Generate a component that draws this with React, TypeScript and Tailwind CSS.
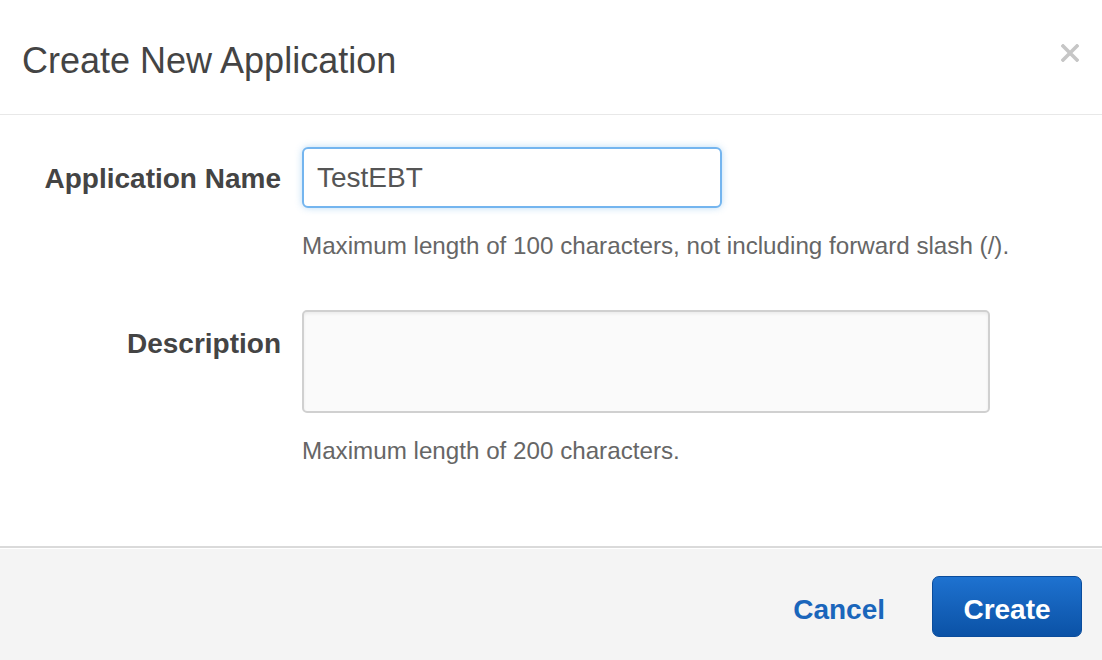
import React from "react";

const font = { fontFamily: '"Liberation Sans", Arial, Helvetica, sans-serif' };

export default function App() {
  return (
    <div className="w-[1102px] h-[660px] bg-white flex flex-col text-[#444]" style={font}>
      <div className="h-[114px] shrink-0 flex items-center justify-between pl-[22px] pr-[23px] pt-[8px]">
        <h1 className="text-[36px] leading-none text-[#444]">Create New Application</h1>
        <svg width="18" height="18" viewBox="0 0 18 18" className="mb-[16px]">
          <path d="M2 2 L16 16 M16 2 L2 16" stroke="#c6c6c6" strokeWidth="3.6" strokeLinecap="square" />
        </svg>
      </div>
      <div className="h-px bg-[#e8e8e8]" />

      <div className="flex-1 pt-[32px]">
        <div className="flex gap-[21px]">
          <div className="w-[281px] shrink-0 h-[60px] pt-[3px] flex items-center justify-end">
            <span className="text-[28px] font-bold text-[#444]">Application Name</span>
          </div>
          <div className="flex flex-col">
            <div className="w-[420px] h-[61px] rounded-[6px] border-2 border-[#74b5ef] bg-white shadow-[0_0_7px_rgba(102,175,233,0.45)] flex items-center pl-[13px]">
              <span className="text-[28px] text-[#555]">TestEBT</span>
            </div>
            <p className="mt-[22px] text-[24.2px] leading-[32px] text-[#666]">
              Maximum length of 100 characters, not including forward slash (/).
            </p>
          </div>
        </div>

        <div className="flex gap-[21px] mt-[48px]">
          <div className="w-[281px] shrink-0 h-[64px] pt-[3px] flex items-center justify-end">
            <span className="text-[28px] font-bold text-[#444]">Description</span>
          </div>
          <div className="flex flex-col">
            <div className="w-[688px] h-[103px] rounded-[5px] border-2 border-[#d0d0d0] bg-[#fafafa] shadow-[inset_0_2px_3px_rgba(0,0,0,0.06)]" />
            <p className="mt-[22px] text-[24.2px] leading-[32px] text-[#666]">
              Maximum length of 200 characters.
            </p>
          </div>
        </div>
      </div>

      <div className="h-[2px] bg-[#dadada]" />
      <div className="h-px bg-white" />
      <div className="h-[111px] bg-[#f4f4f4] flex items-start justify-end gap-[47px] pt-[27px] pr-[20px]">
        <button className="h-[61px] pt-[6px] text-[28px] font-bold text-[#1a66bb]">Cancel</button>
        <button className="w-[150px] h-[61px] pt-[6px] rounded-[7px] border border-[#0a4c9c] bg-gradient-to-b from-[#1e72d0] to-[#0b52a6] text-white text-[28px] font-bold">
          Create
        </button>
      </div>
    </div>
  );
}
